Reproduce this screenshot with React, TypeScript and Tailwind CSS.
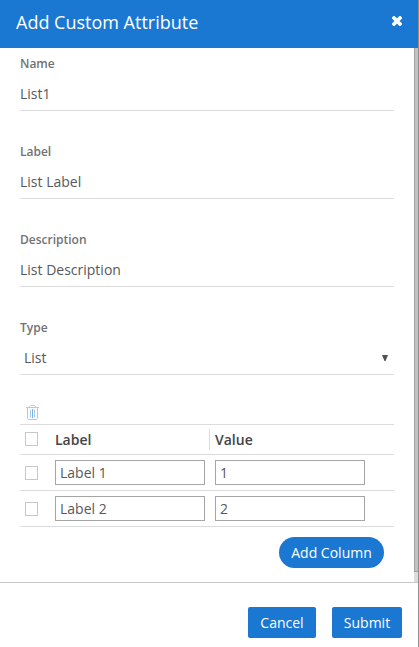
import React, { useState } from "react";

const fields = [
  { name: "Name", value: "List1" },
  { name: "Label", value: "List Label" },
  { name: "Description", value: "List Description" },
];

const initialRows = [
  { label: "Label 1", value: "1" },
  { label: "Label 2", value: "2" },
];

function CloseIcon() {
  return (
    <svg width="10" height="10" viewBox="0 0 10 10" className="block">
      <path d="M2 2 8 8M8 2 2 8" stroke="#fff" strokeWidth="3.7" strokeLinecap="square" strokeLinejoin="round" />
    </svg>
  );
}

function TrashIcon() {
  return (
    <svg width="13" height="15" viewBox="0 0 13 15" fill="none" stroke="#a6ccf0" className="block">
      <path d="M0 2.5h13M3.5 2.5v-1l1-1h4l1 1v1M1.5 2.5v11l1 1h8l1-1v-11" />
      <path d="M4.5 4.5v8M8.5 4.5v8" />
      <path d="M6.5 4v9" stroke="#78aee6" />
    </svg>
  );
}

function Box() {
  return <input type="checkbox" className="block h-[14px] w-[13px] appearance-none border border-[#c8c8c8] bg-white" />;
}

function Field({ name, children }: { name: string; children: React.ReactNode }) {
  return (
    <div className="mb-[25px] h-[63px] border-b border-[#dcdcdc]">
      <div className="h-[29px] pt-[7px] text-[12px] leading-[18px] font-semibold text-[#6f7375]">{name}</div>
      {children}
    </div>
  );
}

export default function App() {
  const [rows, setRows] = useState(initialRows);
  return (
    <div className="flex h-[647px] w-[419px] flex-col overflow-hidden border-r border-[#8e8e8e] bg-white font-['Open_Sans','Noto_Sans',sans-serif] text-[14px] text-[#55595c]">
      <header className="flex h-12 shrink-0 items-center justify-between bg-[#1a78d2] pr-4 pl-4 text-white">
        <h1 className="pb-[5px] text-[18px] leading-6">Add Custom Attribute</h1>
        <button aria-label="Close" className="mb-[7px]">
          <CloseIcon />
        </button>
      </header>

      <main className="flex h-[534px] shrink-0">
        <div className="flex-1 pr-5 pl-5">
          {fields.map((f) => (
            <Field key={f.name} name={f.name}>
              <input defaultValue={f.value} className="block h-8 w-full bg-transparent outline-none" />
            </Field>
          ))}
          <Field name="Type">
            <div className="flex h-8 items-center justify-between pr-[6px] pl-1">
              <span>List</span>
              <svg width="6" height="6" viewBox="0 0 6 6" className="mt-px">
                <path d="M0 0h6L3.5 6h-1z" fill="#505050" />
              </svg>
            </div>
          </Field>

          <div className="mt-[30px] mb-1 pl-[6px]">
            <TrashIcon />
          </div>

          <div className="flex h-[31px] items-center border-y border-[#dcdcdc] text-[#444] font-semibold">
            <div className="mb-px w-[35px] pl-[5px]">
              <Box />
            </div>
            <div className="w-[154px]">Label</div>
            <div className="flex h-[21px] items-center border-l border-[#dcdcdc] pl-[5px]">Value</div>
          </div>
          {rows.map((r, i) => (
            <div key={i} className="flex h-9 items-center border-b border-[#dcdcdc]">
              <div className="w-[35px] pl-[5px]">
                <Box />
              </div>
              <input defaultValue={r.label} className="mr-[10px] h-[25px] w-[150px] border border-[#a5a5a5] px-1 outline-none" />
              <input defaultValue={r.value} className="h-[25px] w-[150px] border border-[#a5a5a5] px-1 outline-none" />
            </div>
          ))}

          <div className="mt-[10px] flex justify-end pr-[10px]">
            <button
              onClick={() => setRows([...rows, { label: "", value: "" }])}
              className="h-[31px] w-[105px] rounded-full bg-[#1a78d2] text-white"
            >
              Add Column
            </button>
          </div>
        </div>
        <div className="w-1 bg-[#dcdcdc]">
          <div className="h-[524px] border-b border-l border-[#a0a0a0] bg-[#c1c1c1]" />
        </div>
      </main>

      <footer className="flex flex-1 justify-end gap-4 border-t border-[#c8c8c8] pt-6 pr-4">
        <button className="h-[31px] w-[68px] rounded-[2px] bg-[#1a78d2] text-white">Cancel</button>
        <button className="h-[31px] w-[70px] rounded-[2px] bg-[#1a78d2] text-white">Submit</button>
      </footer>
    </div>
  );
}
